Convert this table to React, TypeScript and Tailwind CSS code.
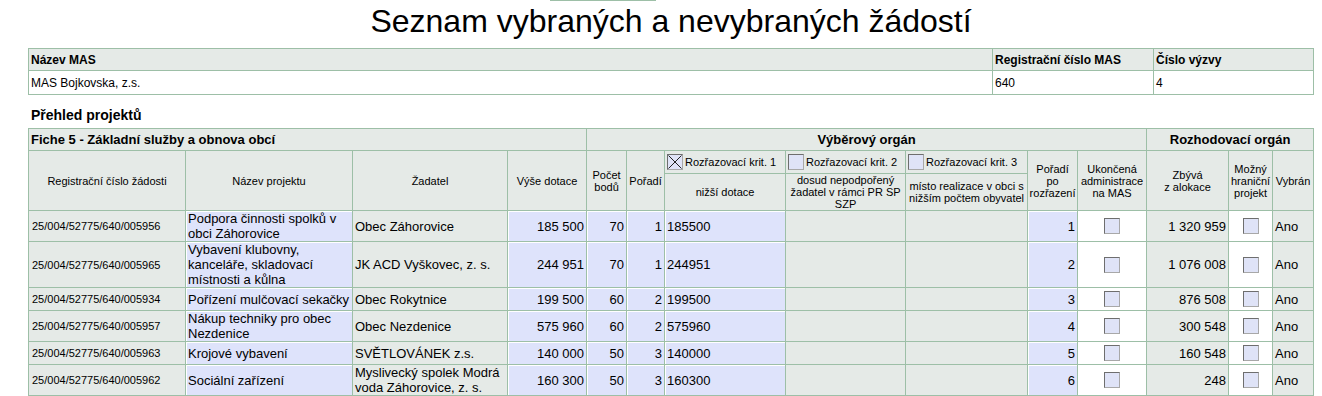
import React from "react";

const cb = "border-r border-b border-[#9dbfa7]";
const GR = "bg-[#e5eae7]";
const LV = "bg-[#dee3fb] shadow-[inset_1px_1px_0_#ffffff]";
const WH = "bg-white";

function Box({ checked }: { checked?: boolean }) {
  return (
    <span className="relative block w-[16px] h-[16px] shrink-0 border border-t-[#6e6e6e] border-l-[#6e6e6e] border-r-[#a8a8a8] border-b-[#a8a8a8] bg-[#dfe3f7]">
      {checked && (
        <svg className="absolute left-0 top-0" width="14" height="14" viewBox="0 0 14 14">
          <path d="M0.5 0.5L13.5 13.5M13.5 0.5L0.5 13.5" stroke="#222" strokeWidth="1" fill="none" />
        </svg>
      )}
    </span>
  );
}

type Row = {
  reg: string;
  name: string;
  app: string;
  vyse: string;
  body: string;
  poradi: string;
  nizsi: string;
  po: string;
  zbyva: string;
};

const rows: Row[] = [
  { reg: "25/004/52775/640/005956", name: "Podpora činnosti spolků v obci Záhorovice", app: "Obec Záhorovice", vyse: "185 500", body: "70", poradi: "1", nizsi: "185500", po: "1", zbyva: "1 320 959" },
  { reg: "25/004/52775/640/005965", name: "Vybavení klubovny, kanceláře, skladovací místnosti a kůlna", app: "JK ACD Vyškovec, z. s.", vyse: "244 951", body: "70", poradi: "1", nizsi: "244951", po: "2", zbyva: "1 076 008" },
  { reg: "25/004/52775/640/005934", name: "Pořízení mulčovací sekačky", app: "Obec Rokytnice", vyse: "199 500", body: "60", poradi: "2", nizsi: "199500", po: "3", zbyva: "876 508" },
  { reg: "25/004/52775/640/005957", name: "Nákup techniky pro obec Nezdenice", app: "Obec Nezdenice", vyse: "575 960", body: "60", poradi: "2", nizsi: "575960", po: "4", zbyva: "300 548" },
  { reg: "25/004/52775/640/005963", name: "Krojové vybavení", app: "SVĚTLOVÁNEK z.s.", vyse: "140 000", body: "50", poradi: "3", nizsi: "140000", po: "5", zbyva: "160 548" },
  { reg: "25/004/52775/640/005962", name: "Sociální zařízení", app: "Myslivecký spolek Modrá voda Záhorovice, z. s.", vyse: "160 300", body: "50", poradi: "3", nizsi: "160300", po: "6", zbyva: "248" },
];

export default function App() {
  return (
    <div className="font-['Liberation_Sans',Arial,sans-serif] text-black bg-white min-h-screen leading-[normal]">
      <div className="ml-[550px] w-[106px] h-px bg-[#9dbfa7]" />
      <div className="ml-[28px] w-[1286px]">
        <h1 className="mt-[2px] text-center text-[32px] leading-[normal] font-normal">
          Seznam vybraných a nevybraných žádostí
        </h1>

        <table className="mt-[8px] w-[1286px] table-fixed border-separate border-spacing-0 border-l border-t border-[#9dbfa7] text-[12px]">
          <colgroup>
            <col className="w-[964px]" />
            <col className="w-[161px]" />
            <col className="w-[160px]" />
          </colgroup>
          <tbody>
            <tr>
              <td className={`${cb} ${GR} h-[22px] px-[2px] font-bold`}>Název MAS</td>
              <td className={`${cb} ${GR} h-[22px] px-[2px] font-bold`}>Registrační číslo MAS</td>
              <td className={`${cb} ${GR} h-[22px] px-[2px] font-bold`}>Číslo výzvy</td>
            </tr>
            <tr>
              <td className={`${cb} ${WH} h-[24px] px-[2px]`}>MAS Bojkovska, z.s.</td>
              <td className={`${cb} ${WH} h-[24px] px-[2px]`}>640</td>
              <td className={`${cb} ${WH} h-[24px] px-[2px]`}>4</td>
            </tr>
          </tbody>
        </table>

        <div className="mt-[12px] mb-[5px] pl-[3px] text-[14px] font-bold leading-[normal]">Přehled projektů</div>

        <table className="w-[1286px] table-fixed border-separate border-spacing-0 border-l border-t border-[#9dbfa7] text-[11px]">
          <colgroup>
            <col className="w-[157px]" />
            <col className="w-[167px]" />
            <col className="w-[155px]" />
            <col className="w-[79px]" />
            <col className="w-[40px]" />
            <col className="w-[38px]" />
            <col className="w-[121px]" />
            <col className="w-[120px]" />
            <col className="w-[122px]" />
            <col className="w-[50px]" />
            <col className="w-[69px]" />
            <col className="w-[82px]" />
            <col className="w-[44px]" />
            <col className="w-[41px]" />
          </colgroup>
          <tbody>
            <tr>
              <td colSpan={4} className={`${cb} ${GR} px-[2px] py-[3px] text-[13px] font-bold text-left`}>
                Fiche 5 - Základní služby a obnova obcí
              </td>
              <td colSpan={7} className={`${cb} ${GR} px-[2px] py-[3px] text-[13px] font-bold text-center`}>
                Výběrový orgán
              </td>
              <td colSpan={3} className={`${cb} ${GR} px-[2px] py-[3px] text-[13px] font-bold text-center`}>
                Rozhodovací orgán
              </td>
            </tr>
            <tr>
              <td rowSpan={2} className={`${cb} ${GR} px-[2px] text-center`}>Registrační číslo žádosti</td>
              <td rowSpan={2} className={`${cb} ${GR} px-[2px] text-center`}>Název projektu</td>
              <td rowSpan={2} className={`${cb} ${GR} px-[2px] text-center`}>Žadatel</td>
              <td rowSpan={2} className={`${cb} ${GR} px-[2px] text-center`}>Výše dotace</td>
              <td rowSpan={2} className={`${cb} ${GR} px-[1px] text-center`}>Počet<br />bodů</td>
              <td rowSpan={2} className={`${cb} ${GR} px-[1px] text-center`}>Pořadí</td>
              <td className={`${cb} ${GR} px-[2px]`}>
                <div className="flex items-center gap-[2px] py-[3px]">
                  <Box checked />
                  <span>Rozřazovací krit. 1</span>
                </div>
              </td>
              <td className={`${cb} ${GR} px-[2px]`}>
                <div className="flex items-center gap-[2px] py-[3px]">
                  <Box />
                  <span>Rozřazovací krit. 2</span>
                </div>
              </td>
              <td className={`${cb} ${GR} px-[2px]`}>
                <div className="flex items-center gap-[2px] py-[3px]">
                  <Box />
                  <span>Rozřazovací krit. 3</span>
                </div>
              </td>
              <td rowSpan={2} className={`${cb} ${GR} px-[1px] text-center`}>Pořadí<br />po<br />rozřazení</td>
              <td rowSpan={2} className={`${cb} ${GR} px-[1px] text-center`}>Ukončená<br />administrace<br />na MAS</td>
              <td rowSpan={2} className={`${cb} ${GR} px-[1px] text-center`}>Zbývá<br />z alokace</td>
              <td rowSpan={2} className={`${cb} ${GR} px-[1px] text-center`}>Možný<br />hraniční<br />projekt</td>
              <td rowSpan={2} className={`${cb} ${GR} px-[1px] text-center`}>Vybrán</td>
            </tr>
            <tr>
              <td className={`${cb} ${GR} px-[2px] text-center`}>nižší dotace</td>
              <td className={`${cb} ${GR} px-[1px] text-center`}>dosud nepodpořený<br />žadatel v rámci PR SP<br />SZP</td>
              <td className={`${cb} ${GR} px-[1px] text-center`}>místo realizace v obci s<br />nižším počtem obyvatel</td>
            </tr>
            {rows.map((r) => (
              <tr key={r.reg}>
                <td className={`${cb} ${GR} px-[3px] text-[11px]`}>{r.reg}</td>
                <td className={`${cb} ${LV} px-[2px] text-[13px]`}>{r.name}</td>
                <td className={`${cb} ${GR} px-[2px] text-[13px]`}>{r.app}</td>
                <td className={`${cb} ${LV} px-[2px] text-[13px] text-right`}>{r.vyse}</td>
                <td className={`${cb} ${LV} px-[2px] text-[13px] text-right`}>{r.body}</td>
                <td className={`${cb} ${LV} px-[2px] text-[13px] text-right`}>{r.poradi}</td>
                <td className={`${cb} ${LV} px-[2px] text-[13px]`}>{r.nizsi}</td>
                <td className={`${cb} ${GR}`} />
                <td className={`${cb} ${GR}`} />
                <td className={`${cb} ${LV} px-[2px] text-[13px] text-right`}>{r.po}</td>
                <td className={`${cb} ${WH}`}>
                  <div className="flex justify-center py-[3px]">
                    <Box />
                  </div>
                </td>
                <td className={`${cb} ${GR} px-[2px] text-[13px] text-right`}>{r.zbyva}</td>
                <td className={`${cb} ${WH}`}>
                  <div className="flex justify-center py-[3px]">
                    <Box />
                  </div>
                </td>
                <td className={`${cb} ${GR} px-[2px] text-[13px]`}>Ano</td>
              </tr>
            ))}
          </tbody>
        </table>
      </div>
    </div>
  );
}
